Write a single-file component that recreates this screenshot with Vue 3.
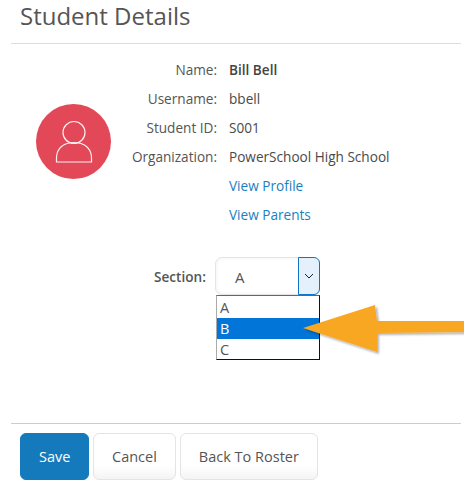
<template>
  <div class="page">
    <h1 class="title">Student Details</h1>

    <div class="details">
      <div class="avatar">
        <svg width="38" height="44" viewBox="0 0 38 44" fill="none" stroke="#fdf0f1" stroke-width="1.2">
          <circle cx="19" cy="12.500" r="11" />
          <path d="M1.500 42 V38 C1.500 28 9 22.500 19 22.500 C29 22.500 36.500 28 36.500 38 V42 Z" />
        </svg>
      </div>
      <dl class="info">
        <template v-for="row in rows" :key="row.label">
          <dt>{{ row.label }}</dt>
          <dd :class="{ strong: row.strong }">{{ row.value }}</dd>
        </template>
        <dd class="link">View Profile</dd>
        <dd class="link">View Parents</dd>
      </dl>
    </div>

    <div class="section-row">
      <label class="section-label">Section:</label>
      <div class="select">
        <span class="select-value">A</span>
        <span class="select-btn">
          <svg width="10" height="6" viewBox="0 0 10 6" fill="none" stroke="#222" stroke-width="1">
            <path d="M1 1 L5 5 L9 1" />
          </svg>
        </span>
        <ul class="options">
          <li v-for="o in options" :key="o" :class="{ active: o === 'B' }">{{ o }}</li>
        </ul>
      </div>
    </div>

    <!-- annotation arrow -->
    <svg class="arrow" width="170" height="60" viewBox="0 0 170 60">
      <defs>
        <filter id="arrowShadow" x="-10%" y="-20%" width="120%" height="150%">
          <feDropShadow dx="2" dy="2" stdDeviation="1.200" flood-color="#000" flood-opacity="0.3" />
        </filter>
      </defs>
      <path d="M3 28 L75 5 L77 21 L170 21 L170 32 L77 33 L77 52 Z" fill="#f8a720" filter="url(#arrowShadow)" />
    </svg>

    <div class="footer">
      <button class="btn primary">Save</button>
      <button class="btn">Cancel</button>
      <button class="btn">Back To Roster</button>
    </div>
  </div>
</template>

<script setup>
const rows = [
  { label: 'Name:', value: 'Bill Bell', strong: true },
  { label: 'Username:', value: 'bbell' },
  { label: 'Student ID:', value: 'S001' },
  { label: 'Organization:', value: 'PowerSchool High School' }
]
const options = ['A', 'B', 'C']
</script>

<style scoped>
.page {
  position: relative;
  width: 464px;
  height: 500px;
  overflow: hidden;
  background: #fff;
  color: #555;
  font-family: "Open Sans", "Liberation Sans", sans-serif;
  font-size: 13.6px;
  box-sizing: border-box;
}
.title {
  margin: 0 3px 0 11px;
  padding: 0 0 0 9px;
  height: 44px;
  box-sizing: border-box;
  border-bottom: 1px solid #ddd;
  font-size: 24px;
  font-weight: 400;
  line-height: 32px;
  color: #555;
}
.details {
  display: flex;
  margin-top: 11px;
  padding-left: 36px;
}
.avatar {
  width: 75px;
  height: 75px;
  margin-top: 49px;
  border-radius: 50%;
  background: #e34858;
  display: flex;
  align-items: center;
  justify-content: center;
  flex: none;
}
.info {
  display: grid;
  grid-template-columns: 106px auto;
  grid-auto-rows: 29px;
  column-gap: 12px;
  margin: 0;
  line-height: 29px;
}
.info dt {
  text-align: right;
  color: #555;
}
.info dd {
  margin: 0;
  color: #4a4a4a;
}
.info .strong {
  font-weight: 600;
  color: #444;
}
.info .link {
  grid-column: 2;
  color: #1a7fc1;
}
.section-row {
  display: flex;
  align-items: center;
  margin-top: 28px;
  padding-left: 154px;
}
.section-label {
  font-weight: 600;
  color: #555;
  width: 61px;
}
.select {
  position: relative;
  display: flex;
  width: 105px;
  height: 38px;
  box-sizing: border-box;
  border: 1px solid #e4e4e4;
  border-radius: 7px;
  background: #fff;
  box-shadow: inset 0 0 4px rgba(0, 0, 0, 0.06);
}
.select-value {
  flex: 1;
  padding-left: 19px;
  line-height: 39px;
  font-size: 15px;
}
.select-btn {
  width: 20px;
  margin: -1px -1px -1px 0;
  border: 1px solid #0f74c8;
  border-radius: 0 6px 6px 0;
  background: #e4f0fb;
  display: flex;
  align-items: center;
  justify-content: center;
}
.options {
  position: absolute;
  top: 37px;
  left: 0;
  width: 104px;
  height: 65px;
  box-sizing: border-box;
  margin: 0;
  padding: 1px 0 0;
  list-style: none;
  background: #fff;
  border: 1px solid #111;
  border-left-color: #aaa;
  border-top-color: #666;
  font-size: 14.500px;
}
.options li {
  height: 21px;
  line-height: 21px;
  padding-left: 3px;
  color: #555;
}
.options li.active {
  background: #0275d8;
  color: #fff;
}
.arrow {
  position: absolute;
  left: 300px;
  top: 300px;
}
.footer {
  position: absolute;
  left: 11px;
  right: 3px;
  top: 423px;
  display: flex;
  gap: 4px;
  padding: 9px 0 0 9px;
  border-top: 1px solid #ccc;
}
.btn {
  height: 47px;
  padding: 0 18px;
  box-sizing: border-box;
  border: 1px solid #e4e4e4;
  border-radius: 6px;
  background: linear-gradient(180deg, #fff 70%, #f4f4f4);
  color: #555;
  font-family: inherit;
  font-size: 14.500px;
}
.btn.primary {
  width: 69px;
  border-color: #147abb;
  background: #147abb;
  color: #fff;
}
</style>
